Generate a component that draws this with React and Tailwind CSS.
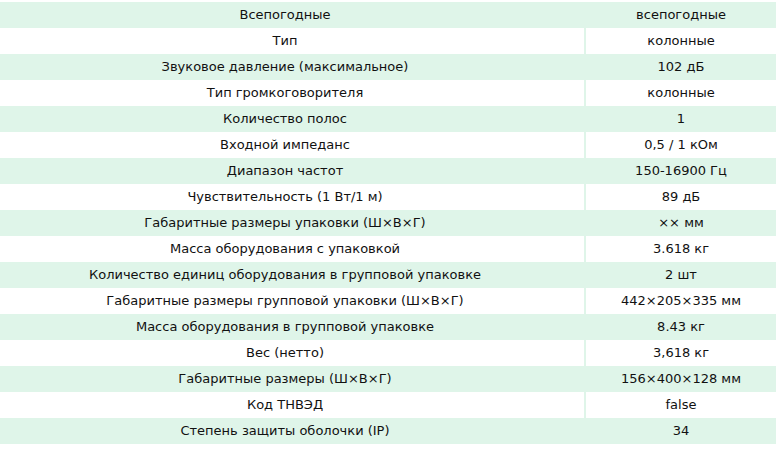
import React from "react";

const rows = [
  ["Всепогодные", "всепогодные"],
  ["Тип", "колонные"],
  ["Звуковое давление (максимальное)", "102 дБ"],
  ["Тип громкоговорителя", "колонные"],
  ["Количество полос", "1"],
  ["Входной импеданс", "0,5 / 1 кОм"],
  ["Диапазон частот", "150-16900 Гц"],
  ["Чувствительность (1 Вт/1 м)", "89 дБ"],
  ["Габаритные размеры упаковки (Ш×В×Г)", "×× мм"],
  ["Масса оборудования с упаковкой", "3.618 кг"],
  ["Количество единиц оборудования в групповой упаковке", "2 шт"],
  ["Габаритные размеры групповой упаковки (Ш×В×Г)", "442×205×335 мм"],
  ["Масса оборудования в групповой упаковке", "8.43 кг"],
  ["Вес (нетто)", "3,618 кг"],
  ["Габаритные размеры (Ш×В×Г)", "156×400×128 мм"],
  ["Код ТНВЭД", "false"],
  ["Степень защиты оболочки (IP)", "34"],
];

export default function App() {
  return (
    <div className="w-[776px] h-[452px] bg-white pt-[2px] text-[13px] text-[#111] font-['DejaVu_Sans',Verdana,sans-serif]">
      {rows.map(([name, value], i) => (
        <div
          key={i}
          className={`flex h-[26px] items-center ${i % 2 === 0 ? "bg-[#dff5e9]" : "bg-white"}`}
        >
          <div className="w-[586px] h-full flex items-center justify-center pr-[14px] border-r-2 border-[#dff5e9]">
            {name}
          </div>
          <div className="flex-1 h-full flex items-center justify-center">
            {value}
          </div>
        </div>
      ))}
    </div>
  );
}
